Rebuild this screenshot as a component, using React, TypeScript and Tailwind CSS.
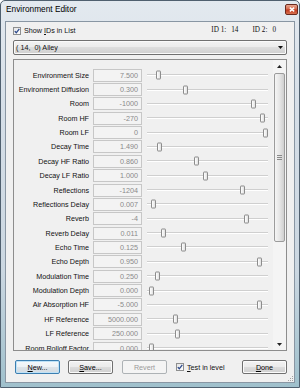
import React from 'react'

type Row = { label: string; value: string; pos: number }

// pos = x of the slider thumb centre, measured on the screenshot
const rows: Row[] = [
  { label: 'Environment Size', value: '7.500', pos: 158 },
  { label: 'Environment Diffusion', value: '0.300', pos: 185 },
  { label: 'Room', value: '-1000', pos: 253 },
  { label: 'Room HF', value: '-270', pos: 262 },
  { label: 'Room LF', value: '0', pos: 265 },
  { label: 'Decay Time', value: '1.490', pos: 159 },
  { label: 'Decay HF Ratio', value: '0.860', pos: 196 },
  { label: 'Decay LF Ratio', value: '1.000', pos: 205 },
  { label: 'Reflections', value: '-1204', pos: 242 },
  { label: 'Reflections Delay', value: '0.007', pos: 153 },
  { label: 'Reverb', value: '-4', pos: 246 },
  { label: 'Reverb Delay', value: '0.011', pos: 163 },
  { label: 'Echo Time', value: '0.125', pos: 183 },
  { label: 'Echo Depth', value: '0.950', pos: 259 },
  { label: 'Modulation Time', value: '0.250', pos: 157 },
  { label: 'Modulation Depth', value: '0.000', pos: 151 },
  { label: 'Air Absorption HF', value: '-5.000', pos: 259 },
  { label: 'HF Reference', value: '5000.000', pos: 175 },
  { label: 'LF Reference', value: '250.000', pos: 177 },
  { label: 'Room Rolloff Factor', value: '0.000', pos: 151 },
]

function CheckBox() {
  return (
    <div className="flex h-[8px] w-[8px] shrink-0 items-center justify-center border border-[#8e8f8f] bg-gradient-to-br from-[#e4e4e4] to-white">
      <svg width="6" height="6" viewBox="0 0 6 6">
        <path d="M0.8 3.1 L2.3 4.8 L5.3 0.9" fill="none" stroke="#2d4a8c" strokeWidth="1.3" />
      </svg>
    </div>
  )
}

function Slider({ pos }: { pos: number }) {
  return (
    <div className="relative flex h-full w-[121px] items-center">
      <div className="h-[2px] w-full border-b border-white bg-[#cfcfcf]" />
      <div
        className="absolute top-1/2 h-[9px] w-[5px] -translate-y-1/2 rounded-[1px] border border-[#8c8c8c] bg-gradient-to-r from-white to-[#e2e2e2]"
        style={{ left: pos - 147 - 2.5 }}
      />
    </div>
  )
}

function Btn({ children, kind = 'normal' }: { children: React.ReactNode; kind?: 'normal' | 'focus' | 'disabled' }) {
  const look =
    kind === 'focus'
      ? 'border-[#3c7fb1] bg-[linear-gradient(#f4f8fb,#edf2f6_50%,#dde4ea_50%,#d2dae1)] shadow-[inset_0_0_0_1px_#bfe2f7] text-black'
      : kind === 'disabled'
        ? 'border-[#adb2b5] bg-[#f4f4f4] text-[#9a9a9a]'
        : 'border-[#707070] bg-[linear-gradient(#f2f2f2,#ebebeb_50%,#dddddd_50%,#cfcfcf)] shadow-[inset_0_0_0_1px_#fbfbfb] text-black'
  return (
    <div className={`flex h-[14px] w-[45px] shrink-0 items-center justify-center rounded-[2px] border ${look}`}>
      {children}
    </div>
  )
}

export default function App() {
  return (
    <div className="h-[388px] w-[300px] overflow-hidden bg-white font-['Liberation_Sans',Arial,sans-serif] text-[7.2px] leading-[9px] text-[#111]">
      <div className="relative flex h-full w-full flex-col rounded-t-[5px] border border-[#50606f] bg-[linear-gradient(#e3e9ef,#d5dee7_30%,#cbd7e1_70%,#9fc0cc)]">
        {/* title bar */}
        <div className="flex h-[20px] shrink-0 items-start pl-[5px] pt-[3px]">
          <span className="text-[8.3px] leading-[10px] text-black">Environment Editor</span>
        </div>
        <div className="absolute right-[1px] top-[3px] flex h-[11px] w-[13px] items-center justify-center rounded-[2px] border border-[#6b2a1e] bg-[linear-gradient(#eaa68f,#d56a4e_45%,#c0391f_55%,#d8714f)]">
          <svg width="6" height="5" viewBox="0 0 6 5">
            <path d="M0.8 0.6 L5.2 4.4 M5.2 0.6 L0.8 4.4" stroke="white" strokeWidth="1.4" />
          </svg>
        </div>

        {/* client area */}
        <div className="relative mx-[4px] mb-[4px] flex flex-1 flex-col border border-[#8996a3] bg-[#f0f0f0] px-[7px]">
          <div className="mt-[4px] flex h-[9px] items-center">
            <CheckBox />
            <span className="ml-[3px]">
              Show <span className="underline">I</span>Ds in List
            </span>
            <div className="ml-auto flex pr-[11px] font-['Liberation_Serif',serif]">
              <span>ID 1:</span>
              <span className="ml-[5px]">14</span>
              <span className="ml-[14px]">ID 2:</span>
              <span className="ml-[5px]">0</span>
            </div>
          </div>

          {/* dropdown */}
          <div className="mt-[5px] flex h-[15px] items-center rounded-[2px] border border-[#707070] bg-[linear-gradient(#f2f2f2,#ebebeb_50%,#dddddd_50%,#cfcfcf)] pl-[2px] pr-[3px] shadow-[inset_0_0_0_1px_#fafafa]">
            <span className="whitespace-pre">( 14,  0) Alley</span>
            <svg className="ml-auto" width="5" height="3" viewBox="0 0 5 3">
              <path d="M0 0 H5 L2.5 3 Z" fill="#111" />
            </svg>
          </div>

          {/* parameter list */}
          <div className="mt-[4px] flex h-[292px] overflow-hidden border border-[#8d8d8d] bg-[#f0f0f0]">
            <div className="flex-1 overflow-hidden pt-[8px]">
              {rows.map((r) => (
                <div key={r.label} className="flex h-[14.37px] items-center">
                  <div className="w-[75px] whitespace-nowrap text-right">{r.label}</div>
                  <div className="ml-[4px] flex h-[13px] w-[49px] items-center justify-end border border-[#c7c7c7] bg-[#f3f3f3] pr-[3px] text-[#8a8a8a]">
                    {r.value}
                  </div>
                  <div className="ml-[5px] h-full">
                    <Slider pos={r.pos} />
                  </div>
                </div>
              ))}
            </div>
            {/* scrollbar */}
            <div className="flex w-[13px] flex-col items-center bg-[#f4f4f4]">
              <div className="flex h-[13px] items-center justify-center">
                <svg width="5" height="3" viewBox="0 0 5 3">
                  <path d="M0 3 H5 L2.5 0 Z" fill="#222" />
                </svg>
              </div>
              <div className="flex h-[169px] w-[11px] flex-col items-center justify-center gap-[1px] rounded-[2px] border border-[#9b9b9b] bg-gradient-to-r from-[#f5f5f5] via-[#e6e6e6] to-[#cfcfcf]">
                <div className="h-[1px] w-[5px] bg-[#8a8a8a]" />
                <div className="h-[1px] w-[5px] bg-[#8a8a8a]" />
                <div className="h-[1px] w-[5px] bg-[#8a8a8a]" />
              </div>
              <div className="flex-1" />
              <div className="flex h-[12px] items-center justify-center">
                <svg width="5" height="3" viewBox="0 0 5 3">
                  <path d="M0 0 H5 L2.5 3 Z" fill="#222" />
                </svg>
              </div>
            </div>
          </div>

          {/* buttons */}
          <div className="mt-[9px] flex h-[14px] items-center pl-[2px]">
            <Btn kind="focus">
              <span className="underline">N</span>ew...
            </Btn>
            <div className="ml-[8px]">
              <Btn>
                <span className="underline">S</span>ave...
              </Btn>
            </div>
            <div className="ml-[9px]">
              <Btn kind="disabled">Revert</Btn>
            </div>
            <div className="ml-[9px] flex items-center">
              <CheckBox />
              <span className="ml-[3px]">
                <span className="underline">T</span>est in level
              </span>
            </div>
            <div className="ml-auto">
              <Btn>
                <span className="underline">D</span>one
              </Btn>
            </div>
          </div>

          {/* size grip */}
          <div className="absolute bottom-[1px] right-[1px] grid grid-cols-3 gap-[1px]">
            <div className="h-[1px] w-[1px]" />
            <div className="h-[1px] w-[1px]" />
            <div className="h-[1px] w-[1px] bg-[#a0a0a0]" />
            <div className="h-[1px] w-[1px]" />
            <div className="h-[1px] w-[1px] bg-[#a0a0a0]" />
            <div className="h-[1px] w-[1px] bg-[#a0a0a0]" />
            <div className="h-[1px] w-[1px] bg-[#a0a0a0]" />
            <div className="h-[1px] w-[1px] bg-[#a0a0a0]" />
            <div className="h-[1px] w-[1px] bg-[#a0a0a0]" />
          </div>
        </div>
      </div>
    </div>
  )
}
